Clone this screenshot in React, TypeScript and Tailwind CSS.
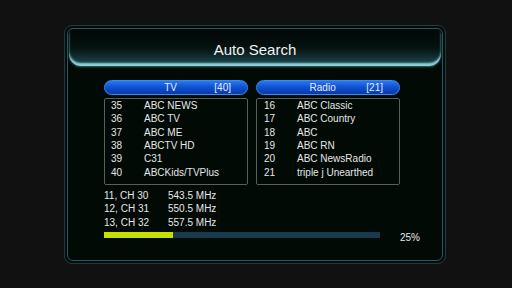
const tv = [
  ["35", "ABC NEWS"],
  ["36", "ABC TV"],
  ["37", "ABC ME"],
  ["38", "ABCTV HD"],
  ["39", "C31"],
  ["40", "ABCKids/TVPlus"],
];

const radio = [
  ["16", "ABC Classic"],
  ["17", "ABC Country"],
  ["18", "ABC"],
  ["19", "ABC RN"],
  ["20", "ABC NewsRadio"],
  ["21", "triple j Unearthed"],
];

const freqs = [
  ["11, CH 30", "543.5 MHz"],
  ["12, CH 31", "550.5 MHz"],
  ["13, CH 32", "557.5 MHz"],
];

function Column({ title, count, rows, padLeft }: { title: string; count: string; rows: string[][]; padLeft: string }) {
  return (
    <div className="w-[144px] flex flex-col">
      <div className="h-[15px] rounded-full border border-[#3b8cf0] bg-gradient-to-b from-[#2a78ee] via-[#0f4fd0] to-[#0a3aa8] flex items-center text-[10px] leading-none text-[#e8eef8]">
        <span className="flex-1 text-center pl-[22px]">{title}</span>
        <span className="pr-[16px]">{count}</span>
      </div>
      <div className={`mt-[3px] h-[87px] border border-[#56605e] rounded-[2px] ${padLeft}`}>
        {rows.map(([n, name]) => (
          <div key={n} className="flex h-[13.33px] leading-[13.33px] text-[10px] text-[#e6e6e6]">
            <span className="w-[33px]">{n}</span>
            <span>{name}</span>
          </div>
        ))}
      </div>
    </div>
  );
}

export default function App() {
  return (
    <div className="w-[512px] h-[288px] bg-[#111111] pt-[25px] pl-[64px] font-['Liberation_Sans',Arial,sans-serif]">
      <div className="w-[382px] h-[239px] rounded-[8px] border border-[#1c3c42] p-[2px] bg-[#050c0a]">
        <div className="h-full rounded-[6px] border border-[#2a565e] bg-[#020a06] flex flex-col">
          <div className="mx-[1px] mt-[1px] h-[36px] pt-[5px] rounded-t-[5px] rounded-b-[12px] bg-gradient-to-b from-[#020806] via-[#051210] to-[#1e5058] shadow-[inset_0_-3px_2px_#8fd0da,0_1px_2px_#2a6a72] flex items-center justify-center text-[15px] text-[#f2f2f2]">
            Auto Search
          </div>
          <div className="pl-[36px] pt-[14px] flex flex-col">
            <div className="flex gap-[8px]">
              <Column title="TV" count="[40]" rows={tv} padLeft="pl-[6px]" />
              <Column title="Radio" count="[21]" rows={radio} padLeft="pl-[7px]" />
            </div>
            <div className="mt-[4px] flex flex-col text-[10px] text-[#e6e6e6]">
              {freqs.map(([ch, mhz]) => (
                <div key={ch} className="flex h-[13.3px] leading-[13.3px]">
                  <span className="w-[64px]">{ch}</span>
                  <span>{mhz}</span>
                </div>
              ))}
            </div>
            <div className="mt-[3px] flex items-start">
              <div className="w-[276px] h-[6px] bg-[#193a4c] flex">
                <div className="h-full bg-[#c6e000]" style={{ width: "25%" }} />
              </div>
              <span className="ml-[20px] -mt-[1px] text-[10px] leading-[13px] text-[#e6e6e6]">25%</span>
            </div>
          </div>
        </div>
      </div>
    </div>
  );
}
